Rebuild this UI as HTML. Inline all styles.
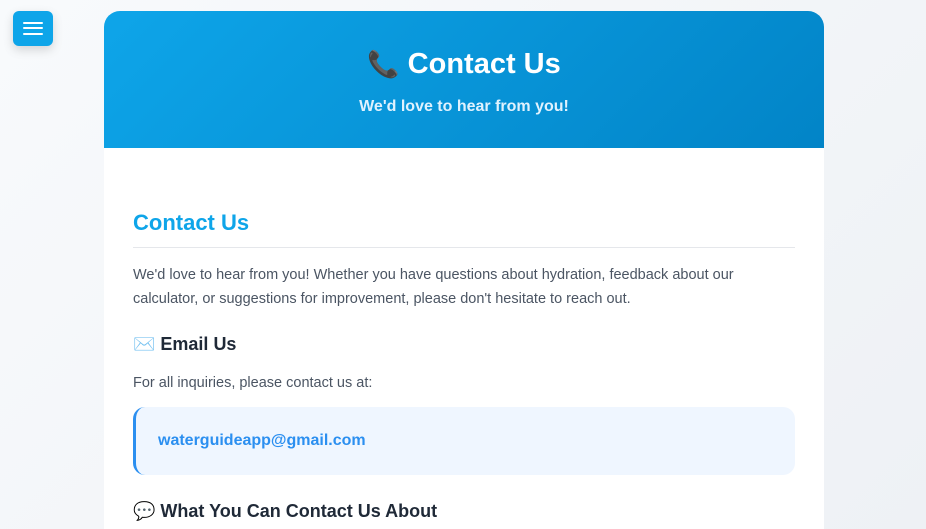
<!DOCTYPE html>
<html><head><meta charset="utf-8"><style>
*{box-sizing:border-box;margin:0;padding:0}
html,body{width:926px;height:529px;overflow:hidden}
body{background:linear-gradient(135deg,#f8fafc,#eef1f5);font-family:"Liberation Sans","Noto Sans CJK SC",sans-serif;position:relative}
.menu{position:absolute;left:13px;top:11px;width:40px;height:35px;border-radius:6px;background:#0ea5e9;box-shadow:0 4px 10px rgba(0,0,0,.15)}
.menu i{position:absolute;left:10px;width:20px;height:2px;background:#fff;border-radius:1px}
.card{position:absolute;left:104px;top:11px;width:720px;height:518px;background:#fff;border-radius:16px 16px 0 0;overflow:hidden}
.hd{height:137px;background:linear-gradient(135deg,#0ea5e9,#0284c7);text-align:center;color:#fff}
.hd h1{padding-top:35px;font-size:29px;font-weight:bold;line-height:36px}
.hd p{margin-top:16px;font-size:16px;font-weight:bold;color:#e0f2fe}
.ct{padding:0 29px}
h2{margin-top:62px;font-size:22px;color:#0ea5e9;font-weight:bold;padding-bottom:11px;border-bottom:1px solid #e5e7eb}
.p{margin-top:15px;font-size:14.5px;line-height:24px;color:#4b5563}
h3{font-size:18px;color:#1f2937;font-weight:bold}
.box{margin-top:12px;height:68px;line-height:68px;background:#eff6ff;border-left:3px solid #2b8ff0;border-radius:12px;padding:0 22px;font-size:16px;font-weight:bold;color:#2b8ff0}
</style></head><body>
<div class="menu"><i style="top:11px"></i><i style="top:16px"></i><i style="top:22px"></i></div>
<div class="card">
<div class="hd"><h1><span style="font-size:26px">📞</span> Contact Us</h1><p>We'd love to hear from you!</p></div>
<div class="ct">
<h2>Contact Us</h2>
<p class="p">We'd love to hear from you! Whether you have questions about hydration, feedback about our calculator, or suggestions for improvement, please don't hesitate to reach out.</p>
<h3 style="margin-top:23px">✉️ Email Us</h3>
<p class="p" style="margin-top:16px">For all inquiries, please contact us at:</p>
<div class="box">waterguideapp@gmail.com</div>
<h3 style="margin-top:26px">💬 What You Can Contact Us About</h3>
</div></div>
</body></html>
